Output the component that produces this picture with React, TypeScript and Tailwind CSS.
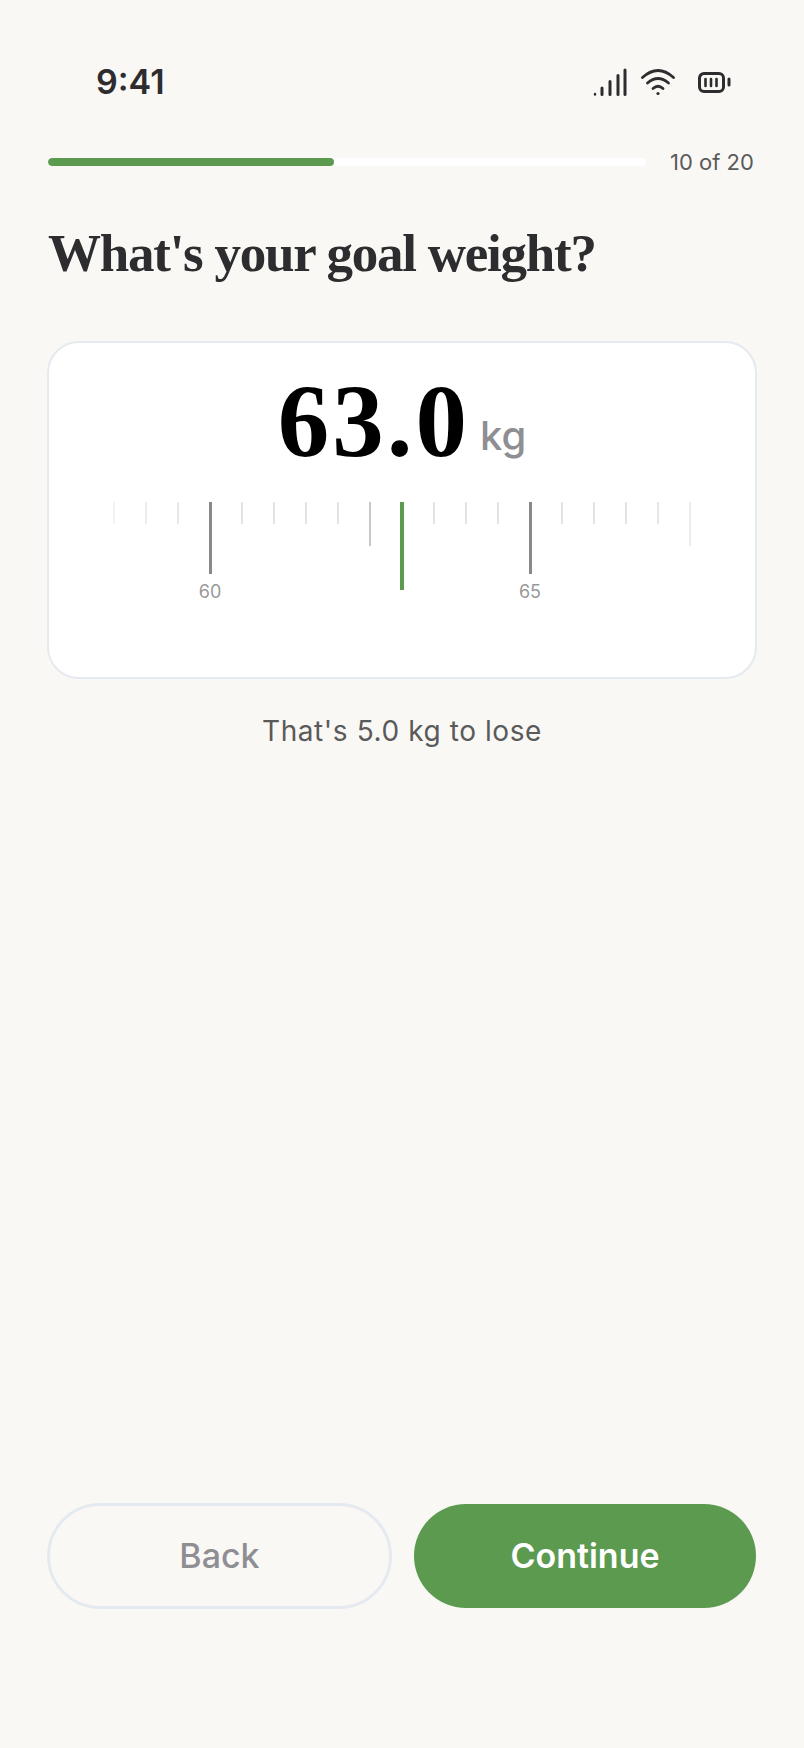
import React from 'react';

const sans = '[font-family:Inter,"Liberation_Sans",sans-serif]';

type TickKind = 'minor' | 'mid' | 'major' | 'current';

interface Tick {
  kind: TickKind;
  label?: string;
  fade: number;
}

// ruler runs from 58.5 to 67.5 in half-kilo steps
const ticks: Tick[] = [
  { kind: 'minor', fade: 0.4 },
  { kind: 'minor', fade: 0.6 },
  { kind: 'minor', fade: 0.75 },
  { kind: 'major', label: '60', fade: 1 },
  { kind: 'minor', fade: 0.9 },
  { kind: 'minor', fade: 0.9 },
  { kind: 'minor', fade: 0.9 },
  { kind: 'minor', fade: 0.9 },
  { kind: 'mid', fade: 1 },
  { kind: 'current', fade: 1 },
  { kind: 'minor', fade: 0.9 },
  { kind: 'minor', fade: 0.9 },
  { kind: 'minor', fade: 0.9 },
  { kind: 'major', label: '65', fade: 1 },
  { kind: 'minor', fade: 0.9 },
  { kind: 'minor', fade: 0.9 },
  { kind: 'minor', fade: 0.9 },
  { kind: 'minor', fade: 0.8 },
  { kind: 'mid', fade: 0.35 },
];

const tickClass: Record<TickKind, string> = {
  minor: 'w-[2px] h-[22px] bg-[#e0e0e0]',
  mid: 'w-[2px] h-[44px] bg-[#c8c8c8]',
  major: 'w-[3px] h-[72px] bg-[#8a8a8a]',
  current: 'w-[4px] h-[88px] bg-[#5b9a4f]',
};

const SignalIcon = () => (
  <svg width="34" height="28" viewBox="0 0 34 28" fill="none" stroke="#2d2d2f" strokeWidth="3" strokeLinecap="round">
    <path d="M2 26v.5" strokeWidth="2.4" />
    <path d="M9 20v6.5" />
    <path d="M17 13.5v13" />
    <path d="M25 7.5v19" />
    <path d="M32 2v24.5" />
  </svg>
);

const WifiIcon = () => (
  <svg width="34" height="28" viewBox="0 0 34 28" fill="none" stroke="#2d2d2f" strokeWidth="2.8" strokeLinecap="round">
    <path d="M1.5 9.5Q17 -4.5 32.5 9.5" />
    <path d="M6.5 15Q17 6 27.5 15" />
    <path d="M12 20.5Q17 16 22 20.5" />
    <circle cx="17" cy="25.5" r="1.6" fill="#2d2d2f" stroke="none" />
  </svg>
);

const BatteryIcon = () => (
  <svg width="34" height="24" viewBox="0 0 34 24" fill="none" stroke="#2d2d2f" strokeWidth="3" strokeLinecap="round">
    <rect x="2.5" y="3.5" width="24" height="18" rx="4.5" />
    <path d="M8.5 9v7M14 9v7M19.5 9v7" strokeWidth="2.6" />
    <path d="M32 9v6" />
  </svg>
);

export default function App() {
  return (
    <div className={`${sans} h-[1748px] w-[804px] bg-[#faf8f5] flex flex-col px-[48px] pb-[139px] overflow-hidden`}>
      {/* status bar */}
      <div className="flex items-center justify-between pt-[58px] pl-[48px] pr-[25px] h-[106px]">
        <span className="text-[34px] leading-[48px] font-semibold text-[#2d2d2f]">9:41</span>
        <div className="flex items-center gap-[14px]">
          <SignalIcon />
          <WifiIcon />
          <span className="ml-[8px]"><BatteryIcon /></span>
        </div>
      </div>

      {/* progress */}
      <div className="flex items-center mt-[41px]">
        <div className="w-[598px] h-[8px] rounded-full bg-white overflow-hidden">
          <div className="w-[286px] h-full rounded-full bg-[#5b9a4f]" />
        </div>
        <span className="ml-[24px] text-[22px] leading-[30px] text-[#5a5a5a]">10 of 20</span>
      </div>

      <h1 className="mt-[42px] text-[53px] leading-[68px] font-bold text-[#2d2d2f] tracking-[-1.25px] [font-family:'Liberation_Serif',serif]">
        What's your goal weight?
      </h1>

      {/* weight picker */}
      <div className="mt-[54px] -mx-[1px] h-[338px] rounded-[32px] border-2 border-[#e5eaf0] bg-white flex flex-col items-center">
        <div className="mt-[30px] h-[96px] flex items-end justify-center">
          <span className="text-[103px] leading-[96px] font-bold text-black tracking-[3px] [font-family:'Liberation_Serif',serif]">63.0</span>
          <span className="ml-[10px] mb-[3px] text-[40px] leading-[60px] font-medium text-[#8e8e93]">kg</span>
        </div>
        <div className="mt-[33px] flex justify-center">
          {ticks.map((tick, i) => (
            <div key={i} className="relative w-[32px] flex justify-center items-start" style={{ opacity: tick.fade }}>
              <div className={tickClass[tick.kind]} />
              {tick.label && (
                <span className="absolute top-[78px] text-[18px] leading-[24px] text-[#999999]">{tick.label}</span>
              )}
            </div>
          ))}
        </div>
      </div>

      <p className="mt-[32px] text-center text-[28px] leading-[40px] tracking-[0.58px] text-[#5a5a5a]">That's 5.0 kg to lose</p>

      {/* footer actions */}
      <div className="mt-auto flex gap-[22px] -ml-[1px]">
        <button className="w-[345px] h-[106px] pb-[2px] rounded-full border-[3px] border-[#e5eaf0] text-[34px] font-medium text-[#8e8e93]">
          Back
        </button>
        <button className="w-[342px] h-[104px] my-[1px] pb-[2px] rounded-full bg-[#5b9a4f] text-[34px] font-semibold text-white">
          Continue
        </button>
      </div>
    </div>
  );
}
